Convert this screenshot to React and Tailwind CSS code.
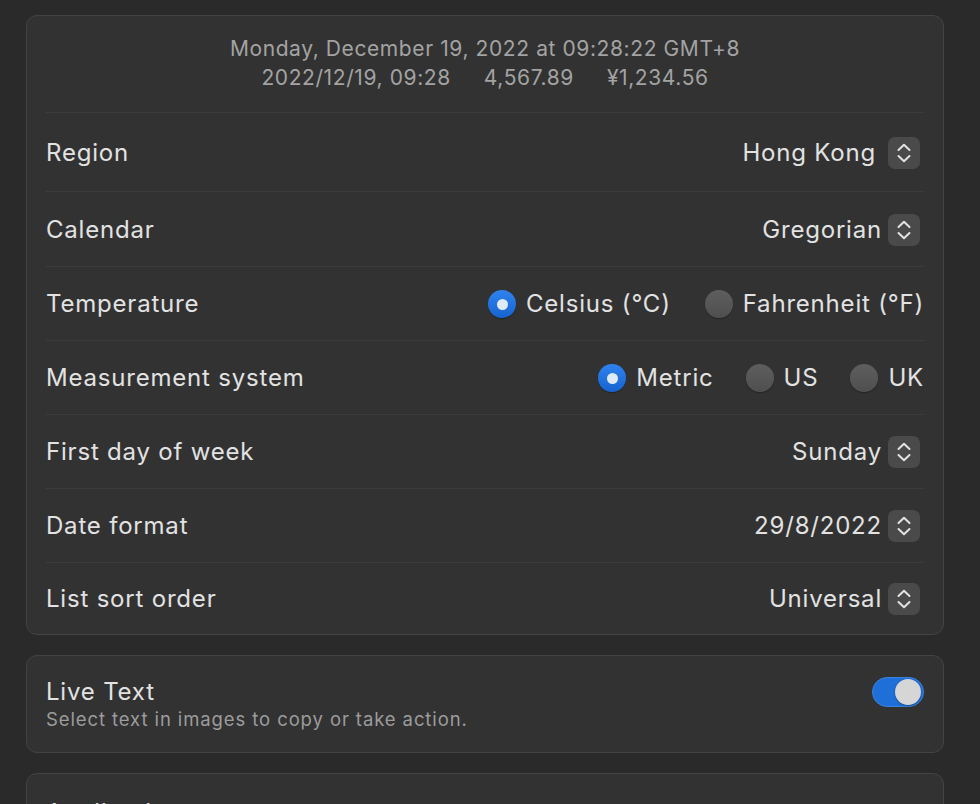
import React from "react";

function Stepper() {
  return (
    <div className="w-[32px] h-[32px] rounded-[7px] bg-[#4a4a4a] flex items-center justify-center">
      <svg width="16" height="24" viewBox="0 0 16 24" fill="none" stroke="#e2e2e2" strokeWidth="2" strokeLinecap="round" strokeLinejoin="round">
        <path d="M2.5 9 L8 3.8 L13.5 9" />
        <path d="M2.5 15 L8 20.2 L13.5 15" />
      </svg>
    </div>
  );
}

function Radio({ on }) {
  return on ? (
    <div className="w-[28px] h-[28px] rounded-full bg-gradient-to-b from-[#2f83ee] to-[#1663cf] flex items-center justify-center shadow-[0_1px_1px_rgba(0,0,0,0.3)]">
      <div className="w-[11px] h-[11px] rounded-full bg-[#dfeaf7]" />
    </div>
  ) : (
    <div className="w-[28px] h-[28px] rounded-full bg-gradient-to-b from-[#5e5e5e] to-[#4f4f4f] shadow-[0_1px_1px_rgba(0,0,0,0.3)]" />
  );
}

function Row({ label, h, last, children }) {
  return (
    <div className={"flex items-center justify-between pt-[1px] " + h + (last ? "" : " border-b border-[#3c3c3c]")}>
      <span>{label}</span>
      <div className="flex items-center">{children}</div>
    </div>
  );
}

function Select({ value, extra }) {
  return (
    <div className="flex items-center gap-[6px] mr-[4px]">
      <span className={extra}>{value}</span>
      <Stepper />
    </div>
  );
}

function Radios({ options, gap }) {
  return (
    <div className={"flex items-center " + gap}>
      {options.map((o) => (
        <div key={o.label} className="flex items-center gap-[10px]">
          <Radio on={o.on} />
          <span>{o.label}</span>
        </div>
      ))}
    </div>
  );
}

export default function App() {
  return (
    <div
      className="min-h-[804px] bg-[#2a2a2a] pt-[15px] pl-[26px] text-[#e2e2e2] text-[24px] tracking-[0.8px] overflow-hidden"
      style={{ fontFamily: "Inter, 'Noto Sans', sans-serif" }}
    >
      <div className="w-[918px] rounded-[11px] border border-[#434343] bg-[#323232] px-[19px]">
        <div className="pt-[18px] pb-[20px] border-b border-[#3c3c3c] text-[21px] tracking-[0.6px] leading-[29px] text-[#a3a3a3] text-center">
          <div>Monday, December 19, 2022 at 09:28:22 GMT+8</div>
          <div className="flex justify-center gap-[33px]">
            <span>2022/12/19, 09:28</span>
            <span>4,567.89</span>
            <span>¥1,234.56</span>
          </div>
        </div>
        <Row label="Region" h="h-[79px]">
          <Select value="Hong Kong" extra="mr-[6px]" />
        </Row>
        <Row label="Calendar" h="h-[75px]">
          <Select value="Gregorian" />
        </Row>
        <Row label="Temperature" h="h-[74px]">
          <Radios
            gap="gap-[34px]"
            options={[
              { label: "Celsius (°C)", on: true },
              { label: "Fahrenheit (°F)", on: false },
            ]}
          />
        </Row>
        <Row label="Measurement system" h="h-[74px]">
          <Radios
            gap="gap-[32px]"
            options={[
              { label: "Metric", on: true },
              { label: "US", on: false },
              { label: "UK", on: false },
            ]}
          />
        </Row>
        <Row label="First day of week" h="h-[74px]">
          <Select value="Sunday" />
        </Row>
        <Row label="Date format" h="h-[74px]">
          <Select value="29/8/2022" />
        </Row>
        <Row label="List sort order" h="h-[71px]" last>
          <Select value="Universal" />
        </Row>
      </div>

      <div className="mt-[20px] w-[918px] h-[98px] rounded-[11px] border border-[#434343] bg-[#323232] px-[19px] pt-[21px] flex items-start justify-between">
        <div className="flex flex-col">
          <span className="leading-[30px]">Live Text</span>
          <span className="text-[18.5px] tracking-[0.9px] leading-[24px] text-[#9c9c9c]">Select text in images to copy or take action.</span>
        </div>
        <div className="w-[52px] h-[30px] rounded-full bg-[#1f6fd9] border border-[#3a82e0] flex items-center justify-end pr-[2px]">
          <div className="w-[26px] h-[26px] rounded-full bg-[#d6d6d6] shadow-[0_1px_2px_rgba(0,0,0,0.35)]" />
        </div>
      </div>

      <div className="mt-[20px] w-[918px] h-[98px] rounded-[11px] border border-[#434343] bg-[#323232] px-[19px] pt-[21px]">
        <span className="leading-[30px]">Applications</span>
      </div>
    </div>
  );
}
